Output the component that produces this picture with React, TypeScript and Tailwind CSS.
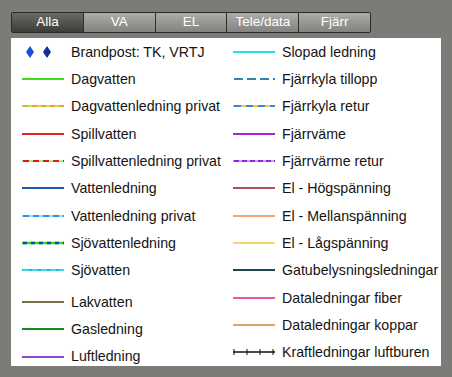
import React from "react";

type Kind =
  | { t: "solid"; c: string; w?: number }
  | { t: "dash"; bg?: string; c: string; w?: number; d?: string }
  | { t: "diamonds" }
  | { t: "ticks" };

const Line = ({ k }: { k: Kind }) => {
  if (k.t === "diamonds") {
    return (
      <svg width="42" height="14" viewBox="0 0 42 14">
        <polygon points="8,1 12,7 8,13 4,7" fill="#1a4fd8" />
        <polygon points="25,1 29,7 25,13 21,7" fill="#142f9a" />
      </svg>
    );
  }
  if (k.t === "ticks") {
    return (
      <svg width="42" height="10" viewBox="0 0 42 10">
        <line x1="0" y1="5" x2="42" y2="5" stroke="#111" strokeWidth="1.5" />
        {[1, 14, 27, 40].map((x) => (
          <line key={x} x1={x} y1="2" x2={x} y2="8" stroke="#111" strokeWidth="1" />
        ))}
      </svg>
    );
  }
  if (k.t === "solid") {
    return (
      <svg width="42" height="6" viewBox="0 0 42 6">
        <line x1="0" y1="3" x2="42" y2="3" stroke={k.c} strokeWidth={k.w ?? 2} />
      </svg>
    );
  }
  return (
    <svg width="42" height="6" viewBox="0 0 42 6">
      {k.bg && <line x1="0" y1="3" x2="42" y2="3" stroke={k.bg} strokeWidth={k.w ?? 2} />}
      <line x1="1" y1="3" x2="42" y2="3" stroke={k.c} strokeWidth={k.w ?? 2} strokeDasharray={k.d ?? "6 4"} />
    </svg>
  );
};

const left: { label: string; k: Kind; gap?: boolean }[] = [
  { label: "Brandpost: TK, VRTJ", k: { t: "diamonds" } },
  { label: "Dagvatten", k: { t: "solid", c: "#3fdc1e" } },
  { label: "Dagvattenledning privat", k: { t: "dash", bg: "#b8e85a", c: "#f0a030", d: "5 4" } },
  { label: "Spillvatten", k: { t: "solid", c: "#e62323" } },
  { label: "Spillvattenledning privat", k: { t: "dash", bg: "#a8f08a", c: "#e01818", d: "6 4" } },
  { label: "Vattenledning", k: { t: "solid", c: "#1b58b8" } },
  { label: "Vattenledning privat", k: { t: "dash", bg: "#a8d8f8", c: "#2a8ef0", d: "6 4" } },
  { label: "Sjövattenledning", k: { t: "dash", bg: "#38d818", c: "#1a4aa8", d: "4 4", w: 2.5 } },
  { label: "Sjövatten", k: { t: "dash", bg: "#1fb8c8", c: "#40d8e8", d: "6 3" } },
  { label: "Lakvatten", k: { t: "solid", c: "#7c7048" }, gap: true },
  { label: "Gasledning", k: { t: "solid", c: "#1a8a1a" } },
  { label: "Luftledning", k: { t: "solid", c: "#8a48d8" } },
];

const right: { label: string; k: Kind }[] = [
  { label: "Slopad ledning", k: { t: "solid", c: "#22e0e8" } },
  { label: "Fjärrkyla tillopp", k: { t: "dash", c: "#2a88a8", d: "9 4" } },
  { label: "Fjärrkyla retur", k: { t: "dash", bg: "#f0c838", c: "#3a88c8", d: "7 5" } },
  { label: "Fjärrväme", k: { t: "solid", c: "#a424e0" } },
  { label: "Fjärrvärme retur", k: { t: "dash", bg: "#c8a0f0", c: "#8a28d8", d: "5 3" } },
  { label: "El - Högspänning", k: { t: "solid", c: "#8e1428", w: 1.3 } },
  { label: "El - Mellanspänning", k: { t: "solid", c: "#f0844a", w: 1.3 } },
  { label: "El - Lågspänning", k: { t: "solid", c: "#f4cc38", w: 1.3 } },
  { label: "Gatubelysningsledningar", k: { t: "solid", c: "#1e4452", w: 2 } },
  { label: "Dataledningar fiber", k: { t: "solid", c: "#e0208a", w: 1.3 } },
  { label: "Dataledningar koppar", k: { t: "solid", c: "#d08432", w: 1.6 } },
  { label: "Kraftledningar luftburen", k: { t: "ticks" } },
];

const Row = ({ label, k }: { label: string; k: Kind }) => (
  <div className="flex h-[27.33px] items-center whitespace-nowrap">
    <div className="flex w-[49px] shrink-0 items-center">
      <Line k={k} />
    </div>
    <span className="text-[14.2px] leading-none text-[#141414]">{label}</span>
  </div>
);

const tabs = ["Alla", "VA", "EL", "Tele/data", "Fjärr"];

export default function App() {
  return (
    <div
      className="relative h-[377px] w-[452px] overflow-hidden bg-[#7b7b77]"
      style={{ fontFamily: '"Liberation Sans", Arial, sans-serif' }}
    >
      <div className="pl-[11px] pt-[12px]">
        <div className="flex h-[21px] w-[360px] overflow-hidden rounded-[2px] border border-[#2a2a28]">
          {tabs.map((t, i) => (
            <div
              key={t}
              className={
                "flex flex-1 items-center justify-center text-[13.5px] text-white " +
                (i > 0 ? "border-l border-[#2e2e2c] " : "") +
                (i === 0
                  ? "bg-gradient-to-b from-[#6a6a66] to-[#3c3c3a]"
                  : "bg-gradient-to-b from-[#acaca8] to-[#82827e]")
              }
            >
              {t}
            </div>
          ))}
        </div>
      </div>
      <div className="ml-[11px] mt-[5px] flex h-[328px] w-[430px] overflow-hidden bg-white">
        <div className="w-[211px] shrink-0 pl-[11px]">
          {left.map((r) => (
            <React.Fragment key={r.label}>
              {r.gap && <div className="h-[4.3px]" />}
              <Row label={r.label} k={r.k} />
            </React.Fragment>
          ))}
        </div>
        <div className="min-w-0 flex-1 overflow-hidden pl-[11px]">
          {right.map((r) => (
            <Row key={r.label} label={r.label} k={r.k} />
          ))}
        </div>
      </div>
    </div>
  );
}
